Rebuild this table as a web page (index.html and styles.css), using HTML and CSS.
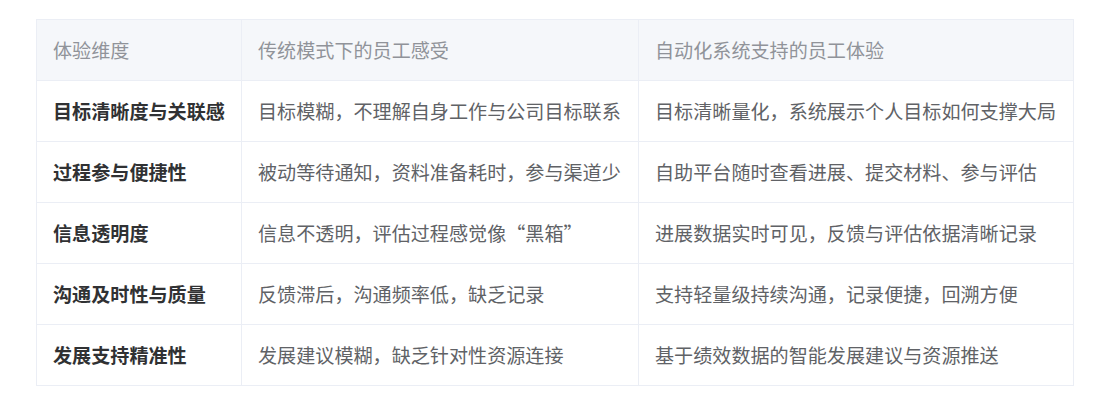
FILE: index.html
```html
<!DOCTYPE html>
<html lang="zh-CN">
<head>
<meta charset="utf-8">
<link rel="stylesheet" href="styles.css">
</head>
<body>
<table class="cmp">
  <colgroup>
    <col class="c1"><col class="c2"><col class="c3">
  </colgroup>
  <thead>
    <tr><th>体验维度</th><th>传统模式下的员工感受</th><th>自动化系统支持的员工体验</th></tr>
  </thead>
  <tbody>
    <tr><td class="dim">目标清晰度与关联感</td><td>目标模糊，不理解自身工作与公司目标联系</td><td>目标清晰量化，系统展示个人目标如何支撑大局</td></tr>
    <tr><td class="dim">过程参与便捷性</td><td>被动等待通知，资料准备耗时，参与渠道少</td><td>自助平台随时查看进展、提交材料、参与评估</td></tr>
    <tr><td class="dim">信息透明度</td><td>信息不透明，评估过程感觉像“黑箱”</td><td>进展数据实时可见，反馈与评估依据清晰记录</td></tr>
    <tr><td class="dim">沟通及时性与质量</td><td>反馈滞后，沟通频率低，缺乏记录</td><td>支持轻量级持续沟通，记录便捷，回溯方便</td></tr>
    <tr><td class="dim">发展支持精准性</td><td>发展建议模糊，缺乏针对性资源连接</td><td>基于绩效数据的智能发展建议与资源推送</td></tr>
  </tbody>
</table>
</body>
</html>
```
FILE: styles.css
```css
html, body {
  margin: 0;
  background: #ffffff;
}
body {
  padding: 19px 34px 0 36px;
  font-family: "Noto Sans CJK SC", "Liberation Sans", sans-serif;
}
.cmp {
  width: 1037px;
  border-collapse: collapse;
  table-layout: fixed;
  font-size: 19.1px;
}
.c1 { width: 205px; }
.c2 { width: 397px; }
.c3 { width: 435px; }
.cmp th, .cmp td {
  border: 1px solid #ebeef5;
  padding: 16px 16px;
  height: 28px;
  line-height: 28px;
  text-align: left;
  white-space: nowrap;
  box-sizing: content-box;
}
.cmp th {
  background: #f5f7fa;
  color: #909399;
  font-weight: normal;
}
.cmp td {
  color: #606266;
}
.cmp td.dim {
  color: #303133;
  font-weight: bold;
}
```
